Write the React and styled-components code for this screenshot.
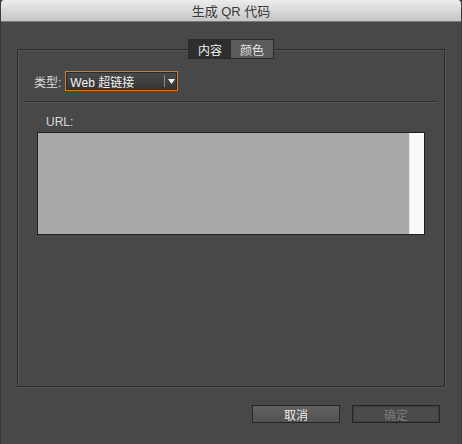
import React from "react";
import styled, { createGlobalStyle } from "styled-components";

const GlobalStyle = createGlobalStyle`
  html, body {
    margin: 0;
    padding: 0;
    background: #3a3a3a;
  }
  * {
    box-sizing: border-box;
  }
`;

const Window = styled.div`
  width: 462px;
  height: 444px;
  display: flex;
  flex-direction: column;
  background: #484848;
  border-left: 1px solid #3b3b3b;
  border-right: 1px solid #3b3b3b;
  border-radius: 4px 4px 0 0;
  overflow: hidden;
  font-family: "Liberation Sans", "Noto Sans CJK SC", sans-serif;
  font-size: 12px;
  color: #dcdcdc;
`;

const TitleBar = styled.div`
  height: 22px;
  flex: none;
  display: flex;
  align-items: center;
  justify-content: center;
  background: linear-gradient(#ececec, #c6c6c6);
  border-bottom: 1px solid #7a7a7a;
  color: #3a3a3a;
  font-size: 13px;
`;

const Body = styled.div`
  flex: 1;
  display: flex;
  flex-direction: column;
  padding: 17px 16px 0 16px;
`;

const TabBar = styled.div`
  align-self: center;
  display: flex;
  margin-bottom: -10px;
  position: relative;
  z-index: 1;
  border: 1px solid #2a2a2a;
`;

const Tab = styled.div`
  width: 42px;
  height: 18px;
  display: flex;
  align-items: center;
  justify-content: center;
  background: ${p => (p.$active ? "#2e2e2e" : "#5b5b5b")};
  color: ${p => (p.$active ? "#f0f0f0" : "#e2e2e2")};
  font-size: 12px;
`;

const Group = styled.div`
  height: 338px;
  display: flex;
  flex-direction: column;
  border: 1px solid #2c2c2c;
  box-shadow: 1px 1px 0 #555555, inset 1px 1px 0 #555555;
  padding-top: 21px;
`;

const TypeRow = styled.div`
  display: flex;
  align-items: center;
  gap: 4px;
  padding-left: 16px;
`;

const Label = styled.span`
  color: #dadada;
  font-size: 12px;
`;

const Select = styled.div`
  width: 113px;
  height: 20px;
  display: flex;
  align-items: stretch;
  border: 1px solid #cf7f31;
  box-shadow: inset 0 0 0 1px #2a2a2a;
  background: linear-gradient(#4a4a4a, #343434);
`;

const SelectText = styled.div`
  flex: 1;
  display: flex;
  align-items: center;
  padding-left: 4px;
  color: #f2f2f2;
  font-size: 12px;
`;

const SelectArrow = styled.div`
  width: 13px;
  display: flex;
  align-items: center;
  justify-content: center;
  border-left: 1px solid #8a8a8a;
  margin: 3px 0;
`;

const Separator = styled.div`
  height: 1px;
  margin: 10px 7px 0 6px;
  background: #2e2e2e;
  box-shadow: 0 1px 0 #555555;
`;

const UrlSection = styled.div`
  display: flex;
  flex-direction: column;
  padding: 0 19px;
`;

const UrlLabel = styled.div`
  margin-top: 13px;
  margin-left: 9px;
  color: #dadada;
  font-size: 12px;
`;

const TextArea = styled.div`
  margin-top: 3px;
  height: 103px;
  display: flex;
  border: 1px solid #1f1f1f;
  background: #a9a9a9;
`;

const TextFill = styled.div`
  flex: 1;
`;

const ScrollStrip = styled.div`
  width: 15px;
  background: #fafafa;
  border-left: 1px solid #e6e6e6;
`;

const Footer = styled.div`
  display: flex;
  justify-content: flex-end;
  gap: 12px;
  padding: 18px 5px 0 0;
`;

const Button = styled.div`
  width: 88px;
  height: 18px;
  display: flex;
  align-items: center;
  justify-content: center;
  border: 1px solid #262626;
  background: ${p =>
    p.$disabled ? "#4a4a4a" : "linear-gradient(#616161, #525252)"};
  box-shadow: ${p => (p.$disabled ? "inset 0 0 0 1px #3c3c3c" : "none")};
  color: ${p => (p.$disabled ? "#7a7a7a" : "#ececec")};
  font-size: 12px;
`;

export default function App() {
  return (
    <>
      <GlobalStyle />
      <Window>
        <TitleBar>生成 QR 代码</TitleBar>
        <Body>
          <TabBar>
            <Tab $active>内容</Tab>
            <Tab>颜色</Tab>
          </TabBar>
          <Group>
            <TypeRow>
              <Label>类型:</Label>
              <Select>
                <SelectText>Web 超链接</SelectText>
                <SelectArrow>
                  <svg width="7" height="5" viewBox="0 0 7 5">
                    <path d="M0 0 H7 L3.5 5 Z" fill="#f2f2f2" />
                  </svg>
                </SelectArrow>
              </Select>
            </TypeRow>
            <Separator />
            <UrlSection>
              <UrlLabel>URL:</UrlLabel>
              <TextArea>
                <TextFill />
                <ScrollStrip />
              </TextArea>
            </UrlSection>
          </Group>
          <Footer>
            <Button>取消</Button>
            <Button $disabled>确定</Button>
          </Footer>
        </Body>
      </Window>
    </>
  );
}
